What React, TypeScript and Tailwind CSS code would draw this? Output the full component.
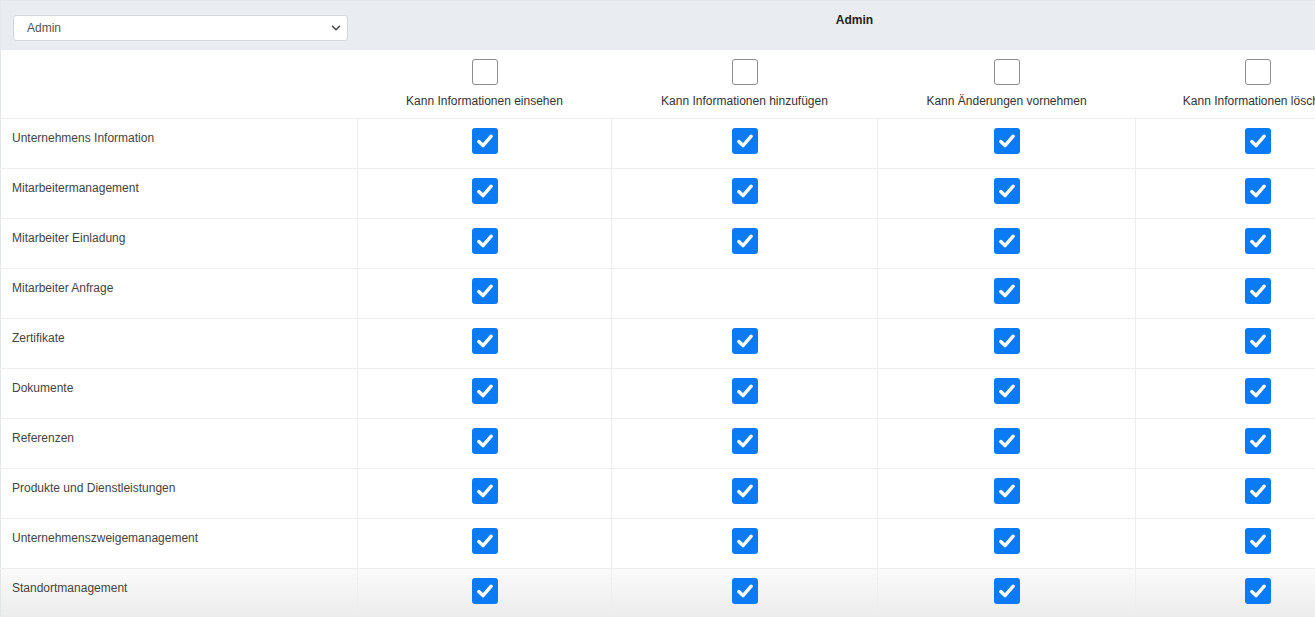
import * as React from "react";
import { ChevronDown } from "lucide-react";

const columns = [
  "Kann Informationen einsehen",
  "Kann Informationen hinzufügen",
  "Kann Änderungen vornehmen",
  "Kann Informationen löschen",
];

// true = checked, false = no checkbox shown
const rows: { name: string; perms: boolean[] }[] = [
  { name: "Unternehmens Information", perms: [true, true, true, true] },
  { name: "Mitarbeitermanagement", perms: [true, true, true, true] },
  { name: "Mitarbeiter Einladung", perms: [true, true, true, true] },
  { name: "Mitarbeiter Anfrage", perms: [true, false, true, true] },
  { name: "Zertifikate", perms: [true, true, true, true] },
  { name: "Dokumente", perms: [true, true, true, true] },
  { name: "Referenzen", perms: [true, true, true, true] },
  { name: "Produkte und Dienstleistungen", perms: [true, true, true, true] },
  { name: "Unternehmenszweigemanagement", perms: [true, true, true, true] },
  { name: "Standortmanagement", perms: [true, true, true, true] },
];

const CheckedBox = () => (
  <span className="inline-flex h-[26px] w-[26px] items-center justify-center rounded-[3px] bg-[#0b7bf5]">
    <svg width="20" height="20" viewBox="0 0 20 20" fill="none">
      <path
        d="M3.8 10.6 L8 14.6 L16.2 5.2"
        stroke="#ffffff"
        strokeWidth="3.4"
        strokeLinecap="round"
        strokeLinejoin="round"
      />
    </svg>
  </span>
);

const EmptyBox = () => (
  <span className="inline-block h-[26px] w-[26px] rounded-[3px] border border-[#8d8d8d] bg-white" />
);

export default function App() {
  return (
    <div
      className="h-[617px] w-[1315px] overflow-hidden bg-white"
      style={{ fontFamily: '"Liberation Sans", Arial, sans-serif' }}
    >
      <table className="w-[1379px] table-fixed border-collapse border-l border-t border-[#e3e6ea]">
        <colgroup>
          <col className="w-[357px]" />
          <col className="w-[254px]" />
          <col className="w-[266px]" />
          <col className="w-[258px]" />
          <col className="w-[244px]" />
        </colgroup>
        <thead>
          <tr className="h-[49px] bg-[#e9ecf1]">
            <th className="px-[12px] pt-[5px] align-middle font-normal">
              <div className="flex h-[26px] w-[335px] items-center justify-between rounded-[3px] border border-[#d3d6da] bg-white pl-[13px] pr-[4px] text-[12px] text-[#555]">
                <span>Admin</span>
                <ChevronDown className="h-[14px] w-[14px] text-[#444]" strokeWidth={2.5} />
              </div>
            </th>
            <th
              colSpan={4}
              className="pr-[28px] pb-[11px] pt-0 align-middle text-[12px] font-bold text-[#222]"
            >
              Admin
            </th>
          </tr>
          <tr className="h-[69px] border-b border-[#eeeeee]">
            <th />
            {columns.map((c) => (
              <th key={c} className="pt-[9px] align-top font-normal">
                <div className="flex flex-col items-center gap-[7px]">
                  <EmptyBox />
                  <span className="whitespace-nowrap text-[12px] text-[#333]">{c}</span>
                </div>
              </th>
            ))}
          </tr>
        </thead>
        <tbody>
          {rows.map((r, i) => (
            <tr
              key={r.name}
              className={`h-[50px] border-b border-[#eeeeee] ${
                i === rows.length - 1 ? "bg-gradient-to-b from-[#fafafa] to-[#ececec]" : ""
              }`}
            >
              <td className="border-r border-[#eeeeee] pl-[11px] pt-[10px] align-top text-[12px] text-[#444]">
                {r.name}
              </td>
              {r.perms.map((p, j) => (
                <td
                  key={j}
                  className="border-r border-[#eeeeee] pt-[9px] align-top text-center"
                >
                  {p ? <CheckedBox /> : null}
                </td>
              ))}
            </tr>
          ))}
        </tbody>
      </table>
    </div>
  );
}
